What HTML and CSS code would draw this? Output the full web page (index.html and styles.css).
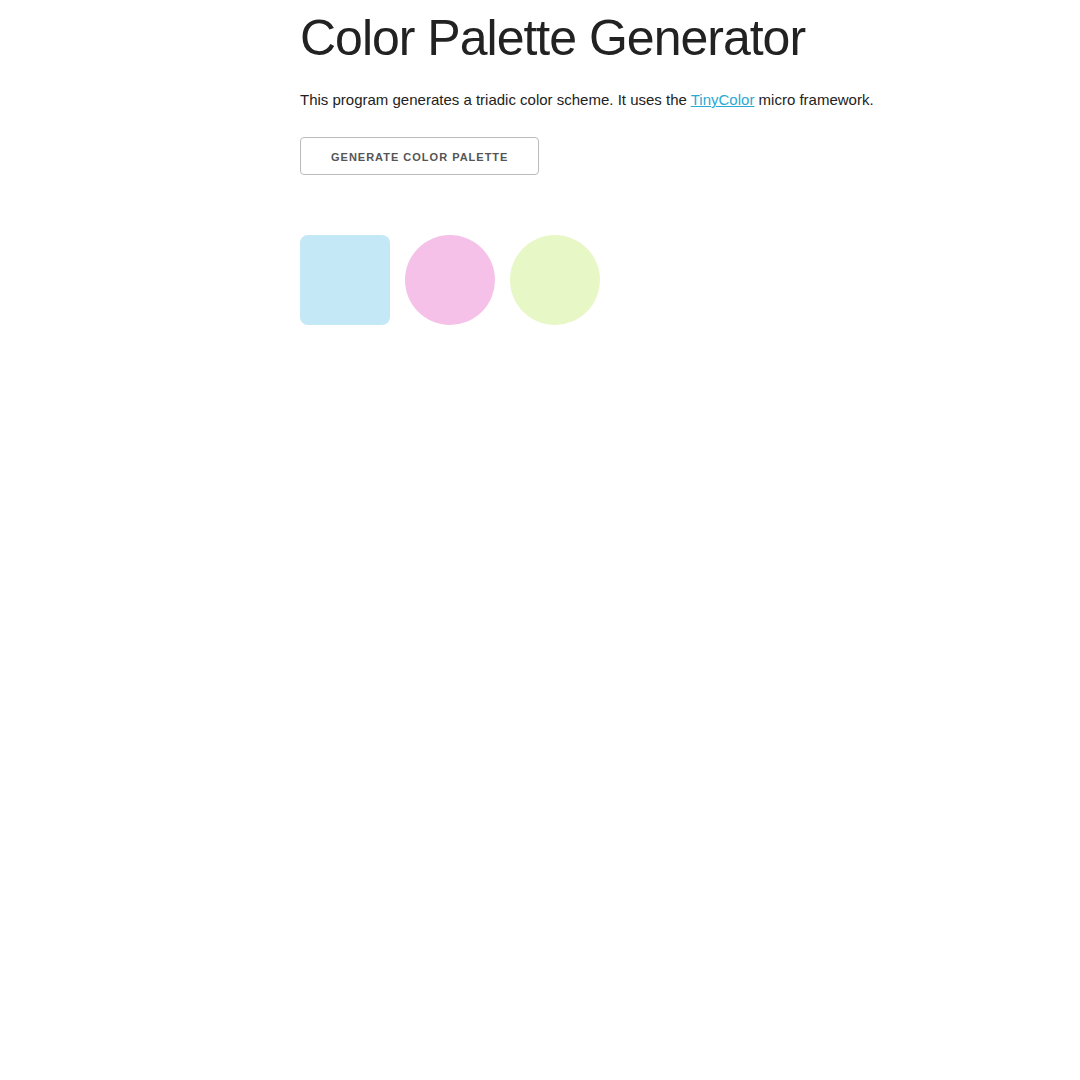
FILE: index.html
```html
<!DOCTYPE html>
<html>
<head>
<meta charset="utf-8">
<link rel="stylesheet" href="styles.css">
</head>
<body>
<div class="container">
  <h1 class="title">Color Palette Generator</h1>
  <p class="intro">This program generates a triadic color scheme. It uses the <a href="#" class="link">TinyColor</a> micro framework.</p>
  <button class="button">Generate Color Palette</button>
  <div class="palette">
    <div class="swatch square" style="background:#c4e8f6"></div>
    <div class="swatch circle" style="background:#f5c1e8"></div>
    <div class="swatch circle" style="background:#e8f7c6"></div>
  </div>
</div>
</body>
</html>
```

FILE: styles.css
```css
html, body {
  margin: 0;
  padding: 0;
  background: #fff;
}
body {
  font-family: "Liberation Sans", Arial, sans-serif;
  font-size: 15px;
  line-height: 1.6;
  color: #222;
}
.container {
  padding: 8px 0 0 300px;
}
.title {
  margin: 0 0 20px 0;
  font-size: 50px;
  line-height: 1.2;
  font-weight: 300;
  letter-spacing: -1px;
  color: #222;
}
.intro {
  margin: 0 0 25px 0;
}
.link {
  color: #2aa9d2;
  text-decoration: underline;
}
.button {
  display: block;
  height: 38px;
  padding: 2px 30px 0;
  font-family: "Liberation Sans", Arial, sans-serif;
  font-size: 11px;
  font-weight: 700;
  line-height: 34px;
  letter-spacing: 1px;
  text-transform: uppercase;
  white-space: nowrap;
  color: #555;
  background: transparent;
  border: 1px solid #bbb;
  border-radius: 4px;
  box-sizing: border-box;
  text-align: center;
}
.palette {
  display: flex;
  gap: 15px;
  margin-top: 60px;
}
.swatch {
  width: 90px;
  height: 90px;
}
.square {
  border-radius: 8px;
}
.circle {
  border-radius: 50%;
}
```
